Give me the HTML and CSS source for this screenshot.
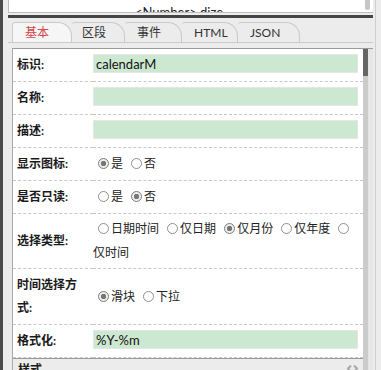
FILE: index.html
```html
<!DOCTYPE html>
<html lang="zh-CN">
<head>
    <meta charset="UTF-8">
    <meta name="viewport" content="width=device-width, initial-scale=1.0">
    <title>属性</title>
    <link rel="stylesheet" href="styles.css">
</head>
<body>
    <div class="app">
        <div class="rail"></div>
        <div class="main">
            <div class="preview">
                <div class="preview-body">&lt;Number&gt; dize</div>
                <div class="preview-thumb"></div>
            </div>
            <div class="splitter"></div>
            <nav class="tabs">
                <a class="tab active">基本</a>
                <a class="tab">区段</a>
                <a class="tab">事件</a>
                <a class="tab">HTML</a>
                <a class="tab">JSON</a>
            </nav>
            <div class="panel">
                <div class="panel-body">
                    <table class="props">
                        <tr class="field-row">
                            <th>标识:</th>
                            <td><input class="field" type="text" value="calendarM"></td>
                        </tr>
                        <tr class="field-row">
                            <th>名称:</th>
                            <td><input class="field" type="text" value=""></td>
                        </tr>
                        <tr class="field-row">
                            <th>描述:</th>
                            <td><input class="field" type="text" value=""></td>
                        </tr>
                        <tr class="choice-row">
                            <th>显示图标:</th>
                            <td><input type="radio" name="icon" checked>是 <input type="radio" name="icon">否</td>
                        </tr>
                        <tr class="choice-row">
                            <th>是否只读:</th>
                            <td><input type="radio" name="readonly">是 <input type="radio" name="readonly" checked>否</td>
                        </tr>
                        <tr class="choice-row wrap">
                            <th>选择类型:</th>
                            <td><input type="radio" name="kind">日期时间 <input type="radio" name="kind">仅日期 <input type="radio" name="kind" checked>仅月份 <input type="radio" name="kind">仅年度 <input type="radio" name="kind">仅时间</td>
                        </tr>
                        <tr class="choice-row tall">
                            <th>时间选择方式:</th>
                            <td><input type="radio" name="mode" checked>滑块 <input type="radio" name="mode">下拉</td>
                        </tr>
                        <tr class="field-row">
                            <th>格式化:</th>
                            <td><input class="field" type="text" value="%Y-%m"></td>
                        </tr>
                    </table>
                    <div class="group">
                        <span>样式</span>
                        <svg class="group-toggle" width="11" height="7" viewBox="0 0 11 7">
                            <path d="M4 0.5 L1 3.5 L4 6.5 M7 0.5 L10 3.5 L7 6.5" fill="none" stroke="#a8a8a8" stroke-width="2"/>
                        </svg>
                    </div>
                </div>
                <div class="vscroll"><div class="vscroll-thumb"></div></div>
            </div>
        </div>
        <div class="edge"></div>
    </div>
</body>
</html>
```

FILE: styles.css
```css
html, body {
    margin: 0;
    padding: 0;
    height: 100%;
    overflow: hidden;
}
body {
    background-color: #ececec;
    font-family: "Lato", "Noto Sans CJK SC", sans-serif;
    font-size: 12px;
    color: #222;
}
.app {
    display: flex;
    height: 370px;
}
.rail {
    width: 3px;
    background-color: #4a4a4a;
}
.main {
    flex: 1;
    display: flex;
    flex-direction: column;
    padding: 0 2px 0 5px;
    min-width: 0;
}
.edge {
    width: 5px;
    border-left: 1px solid #cfcfcf;
}
.preview {
    display: flex;
    height: 12px;
    background-color: white;
    border-left: 1px solid #bdbdbd;
    border-bottom: 1px solid #bdbdbd;
    overflow: hidden;
}
.preview-body {
    flex: 1;
    padding: 4px 0 0 126px;
    font-size: 13px;
    line-height: 16px;
    white-space: nowrap;
}
.preview-thumb {
    width: 5px;
    height: 10px;
    margin-right: 3px;
    background-color: #c6c6c6;
    border-radius: 0 0 3px 3px;
}
.splitter {
    height: 3px;
    margin-top: 2px;
    background-color: #454545;
}
.tabs {
    display: flex;
    align-items: flex-end;
    height: 24px;
    padding-left: 4px;
    border-bottom: 1px solid #cacaca;
}
.tab {
    box-sizing: border-box;
    height: 20px;
    padding-left: 12px;
    border: 1px solid #cacaca;
    border-bottom: none;
    border-left: none;
    border-radius: 3px 14px 0 0;
    line-height: 19px;
    color: #333;
    text-decoration: none;
}
.tab:nth-child(1) { width: 60px; border-left: 1px solid #cacaca; }
.tab:nth-child(2) { width: 53px; padding-left: 10px; }
.tab:nth-child(3) { width: 57px; }
.tab:nth-child(4) { width: 56px; }
.tab:nth-child(5) { width: 62px; }
.tab.active {
    color: #d04848;
    background-color: #f6f6f6;
}
.panel {
    flex: 1;
    display: flex;
    min-height: 0;
    margin: 5px 0 0 4px;
    padding-right: 5px;
    border-top: 1px solid #9a9a9a;
    border-left: 1px solid #aaa;
    background-color: #e6e6e6;
}
.panel-body {
    flex: 1;
    background-color: white;
    overflow: hidden;
}
.vscroll {
    width: 5px;
    background-color: #cbcbcb;
}
.vscroll-thumb {
    height: 27px;
    background-color: #666;
}
.props {
    width: 100%;
    border-collapse: collapse;
}
.props tr {
    border-bottom: 1px dashed #c8c8c8;
}
.props th {
    width: 70px;
    padding: 0 6px 0 4px;
    text-align: left;
    vertical-align: middle;
    font-weight: bold;
    line-height: 18px;
    color: #1a1a1a;
}
.field-row td {
    padding: 5px 5px 8px 0;
}
.field {
    display: block;
    box-sizing: border-box;
    width: 100%;
    height: 19px;
    margin: 0;
    padding: 0 2px;
    border: 1px solid #e6e6e6;
    background-color: #cde8d0;
    font-family: "Lato", "Noto Sans CJK SC", sans-serif;
    font-size: 13px;
    color: #111;
    outline: none;
}
.choice-row td {
    padding: 4px 5px 4px 0;
    line-height: 24px;
}
.choice-row.wrap td {
    padding: 3px 5px 3px 0;
}
.choice-row.tall th {
    padding-top: 4px;
    padding-bottom: 5px;
    line-height: 23px;
}
.props input[type=radio] {
    appearance: none;
    box-sizing: border-box;
    width: 11px;
    height: 11px;
    margin: 0 2px 0 5px;
    border: 1px solid #8f8f8f;
    border-radius: 50%;
    background-color: white;
    vertical-align: -1px;
}
.props input[type=radio]:checked {
    border-color: #7c7c7c;
    background: radial-gradient(circle, #777 0 2.4px, #eee 3px);
}
.group {
    display: flex;
    justify-content: space-between;
    align-items: flex-start;
    height: 100%;
    padding: 3px 5px 0 5px;
    border-top: 1px solid #9a9a9a;
    background-color: #ececec;
    font-weight: bold;
    line-height: 16px;
    color: #1a1a1a;
}
.group-toggle {
    margin-top: 3px;
}
```
